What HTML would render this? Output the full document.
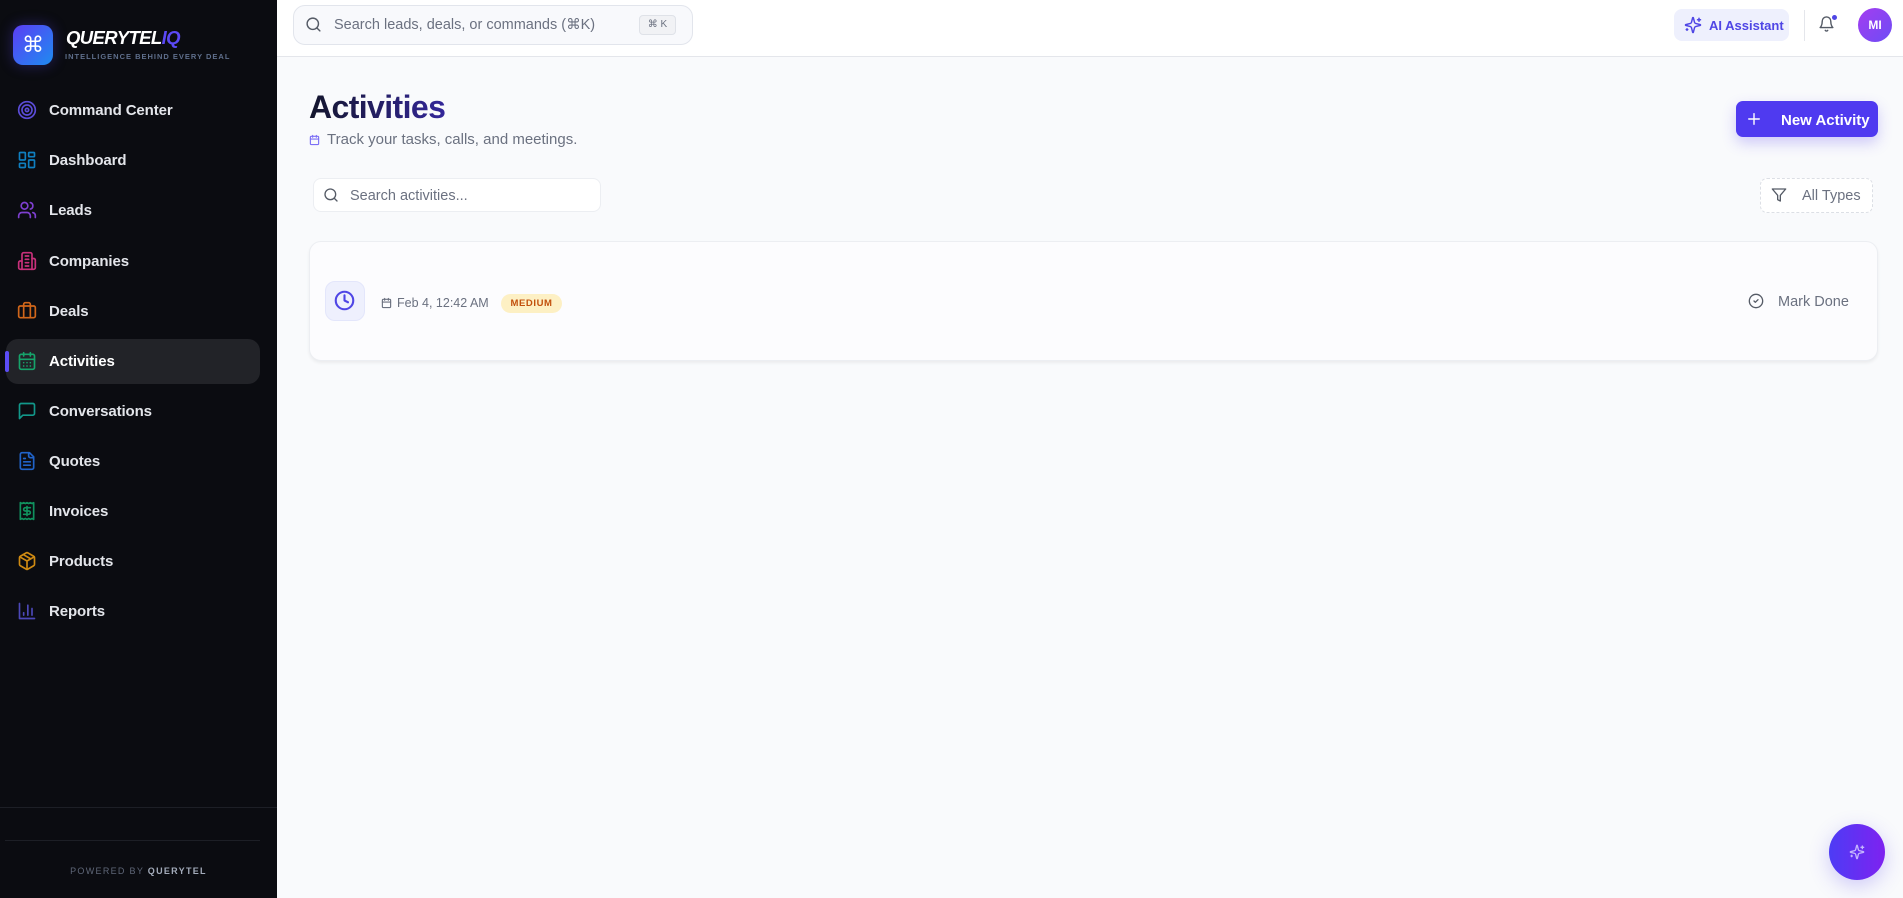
<!DOCTYPE html>
<html><head><meta charset="utf-8"><style>
*{box-sizing:border-box;margin:0;padding:0}
body{width:1903px;height:898px;overflow:hidden;font-family:"Liberation Sans",sans-serif;background:#f9fafc;position:relative}
.sb{position:absolute;left:0;top:0;width:277px;height:898px;background:#0b0c11}
.abs{position:absolute}
.nav{position:absolute;left:0;width:277px;height:46px;display:flex;align-items:center}
.nav svg{position:absolute;left:17px;top:13px;width:20px;height:20px;fill:none;stroke-width:2;stroke-linecap:round;stroke-linejoin:round}
.nav span{position:absolute;left:49px;top:15px;color:#e3e5ea;font-size:15px;font-weight:bold;letter-spacing:-.1px}
svg.i{fill:none;stroke-linecap:round;stroke-linejoin:round}
</style></head><body>
<div class="sb">
  <div class="abs" style="left:13px;top:25px;width:40px;height:40px;border-radius:10px;background:linear-gradient(135deg,#5b3df5,#1e8cf0);box-shadow:0 0 14px rgba(90,70,240,.35);display:flex;align-items:center;justify-content:center;color:#fff;font-size:22px;font-family:'DejaVu Sans',sans-serif">⌘</div>
  <div class="abs" style="left:66px;top:27px;font-size:18.5px;font-weight:900;font-style:italic;color:#fff;letter-spacing:-.6px">QUERYTEL<span style="color:#5b49f5">IQ</span></div>
  <div class="abs" style="left:65px;top:52px;font-size:7.5px;font-weight:bold;color:#5f6f8c;letter-spacing:1px">INTELLIGENCE BEHIND EVERY DEAL</div>

  <div class="abs" style="left:6px;top:339px;width:254px;height:45px;border-radius:12px;background:#222328"></div>
  <div class="abs" style="left:5px;top:351px;width:4px;height:21px;border-radius:2px;background:#5b4cf5"></div>

  <div class="nav" style="top:87px"><svg viewBox="0 0 24 24" stroke="#5b4cd8"><circle cx="12" cy="12" r="10"/><circle cx="12" cy="12" r="6"/><circle cx="12" cy="12" r="2"/></svg><span>Command Center</span></div>
  <div class="nav" style="top:137px"><svg viewBox="0 0 24 24" stroke="#0f7fc0"><rect x="3" y="3" width="7" height="9" rx="1"/><rect x="14" y="3" width="7" height="5" rx="1"/><rect x="14" y="12" width="7" height="9" rx="1"/><rect x="3" y="16" width="7" height="5" rx="1"/></svg><span>Dashboard</span></div>
  <div class="nav" style="top:187px"><svg viewBox="0 0 24 24" stroke="#7e3fd0"><path d="M16 21v-2a4 4 0 0 0-4-4H6a4 4 0 0 0-4 4v2"/><circle cx="9" cy="7" r="4"/><path d="M22 21v-2a4 4 0 0 0-3-3.87M16 3.13a4 4 0 0 1 0 7.75"/></svg><span>Leads</span></div>
  <div class="nav" style="top:238px"><svg viewBox="0 0 24 24" stroke="#c8307a"><path d="M6 22V4a2 2 0 0 1 2-2h8a2 2 0 0 1 2 2v18Z"/><path d="M6 12H4a2 2 0 0 0-2 2v6a2 2 0 0 0 2 2h2M18 9h2a2 2 0 0 1 2 2v9a2 2 0 0 1-2 2h-2M10 6h4M10 10h4M10 14h4M10 18h4"/></svg><span>Companies</span></div>
  <div class="nav" style="top:288px"><svg viewBox="0 0 24 24" stroke="#d0661a"><path d="M16 20V4a2 2 0 0 0-2-2h-4a2 2 0 0 0-2 2v16"/><rect x="2" y="6" width="20" height="14" rx="2"/></svg><span>Deals</span></div>
  <div class="nav" style="top:338px"><svg viewBox="0 0 24 24" stroke="#16a36a"><rect x="3" y="4" width="18" height="18" rx="2"/><path d="M16 2v4M8 2v4M3 10h18M8 14h.01M12 14h.01M16 14h.01M8 18h.01M12 18h.01M16 18h.01"/></svg><span style="color:#fff">Activities</span></div>
  <div class="nav" style="top:388px"><svg viewBox="0 0 24 24" stroke="#12988a"><path d="M21 15a2 2 0 0 1-2 2H7l-4 4V5a2 2 0 0 1 2-2h14a2 2 0 0 1 2 2z"/></svg><span>Conversations</span></div>
  <div class="nav" style="top:438px"><svg viewBox="0 0 24 24" stroke="#2063c9"><path d="M15 2H6a2 2 0 0 0-2 2v16a2 2 0 0 0 2 2h12a2 2 0 0 0 2-2V7Z"/><path d="M14 2v4a2 2 0 0 0 2 2h4M10 9H8M16 13H8M16 17H8"/></svg><span>Quotes</span></div>
  <div class="nav" style="top:488px"><svg viewBox="0 0 24 24" stroke="#10915e"><path d="M4 2v20l2-1 2 1 2-1 2 1 2-1 2 1 2-1 2 1V2l-2 1-2-1-2 1-2-1-2 1-2-1-2 1Z"/><path d="M16 8h-6a2 2 0 1 0 0 4h4a2 2 0 1 1 0 4H8M12 17.5v-11"/></svg><span>Invoices</span></div>
  <div class="nav" style="top:538px"><svg viewBox="0 0 24 24" stroke="#cf8a12"><path d="M11 21.73a2 2 0 0 0 2 0l7-4A2 2 0 0 0 21 16V8a2 2 0 0 0-1-1.730l-7-4a2 2 0 0 0-2 0l-7 4A2 2 0 0 0 3 8v8a2 2 0 0 0 1 1.73z"/><path d="M12 22V12M3.3 7 12 12l8.7-5M7.5 4.27l9 5.15"/></svg><span>Products</span></div>
  <div class="nav" style="top:588px"><svg viewBox="0 0 24 24" stroke="#4c48b8"><path d="M3 3v18h18M18 17V9M13 17V5M8 17v-3"/></svg><span>Reports</span></div>

  <div class="abs" style="left:0;top:807px;width:277px;height:1px;background:#1d1f26"></div>
  <div class="abs" style="left:5px;top:840px;width:255px;height:1px;background:#1d1f26"></div>
  <div class="abs" style="left:0;top:866px;width:277px;text-align:center;font-size:9px;letter-spacing:1.3px;color:#5f6778">POWERED BY <b style="color:#a3abba">QUERYTEL</b></div>
</div>

<!-- top bar -->
<div class="abs" style="left:277px;top:0;width:1626px;height:57px;background:#fff;border-bottom:1px solid #e4e6eb"></div>
<div class="abs" style="left:293px;top:5px;width:400px;height:40px;border:1px solid #e2e5ec;border-radius:12px;background:#f8f9fc"></div>
<svg class="i abs" style="left:305px;top:16px" width="17" height="17" viewBox="0 0 24 24" stroke="#555b66" stroke-width="2"><circle cx="11" cy="11" r="8"/><path d="m21 21-4.3-4.3"/></svg>
<div class="abs" style="left:334px;top:17px;font-size:14.5px;color:#6b7180">Search leads, deals, or commands (<span style="font-family:'DejaVu Sans'">⌘</span>K)</div>
<div class="abs" style="left:639px;top:15px;width:37px;height:20px;border:1px solid #dfe2e8;border-radius:4px;background:#f1f2f5;font-size:10px;color:#6b7180;text-align:center;line-height:18px"><span style="font-family:'DejaVu Sans'">⌘</span> K</div>

<div class="abs" style="left:1674px;top:9px;width:115px;height:32px;border-radius:8px;background:#eef0fd"></div>
<svg class="i abs" style="left:1684px;top:16px" width="18" height="18" viewBox="0 0 24 24" stroke="#4f46e5" stroke-width="2"><path d="M9.94 15.5A2 2 0 0 0 8.5 14.06l-6.140-1.58a.5.5 0 0 1 0-.96L8.5 9.94A2 2 0 0 0 9.94 8.5l1.58-6.14a.5.5 0 0 1 .96 0l1.58 6.14A2 2 0 0 0 15.5 9.94l6.14 1.58a.5.5 0 0 1 0 .96L15.5 14.06a2 2 0 0 0-1.44 1.44l-1.58 6.14a.5.5 0 0 1-.96 0z"/><path d="M20 3v4M22 5h-4M4 17v2M5 18H3"/></svg>
<div class="abs" style="left:1709px;top:18px;font-size:13px;font-weight:bold;color:#4f46e5">AI Assistant</div>
<div class="abs" style="left:1804px;top:10px;width:1px;height:31px;background:#e4e6eb"></div>
<svg class="i abs" style="left:1818px;top:15px" width="17" height="18" viewBox="0 0 24 24" stroke="#555b66" stroke-width="2"><path d="M6 8a6 6 0 0 1 12 0c0 7 3 9 3 9H3s3-2 3-9M10.3 21a1.94 1.94 0 0 0 3.4 0"/></svg>
<div class="abs" style="left:1832px;top:15px;width:5px;height:5px;border-radius:50%;background:#4f46e5"></div>
<div class="abs" style="left:1858px;top:8px;width:34px;height:34px;border-radius:50%;background:linear-gradient(135deg,#a43df0,#6d4cf5);color:#fff;font-size:12px;font-weight:bold;text-align:center;line-height:34px">MI</div>

<!-- header -->
<div class="abs" style="left:309px;top:89px;font-size:32px;font-weight:bold;letter-spacing:-.6px;background:linear-gradient(90deg,#13152b,#34279a);-webkit-background-clip:text;color:transparent">Activities</div>
<svg class="i abs" style="left:309px;top:134px" width="11" height="12" viewBox="0 0 24 24" stroke="#7c6ff5" stroke-width="2.5" fill="#d8d4fb"><rect x="3" y="4" width="18" height="18" rx="2"/><path d="M16 2v4M8 2v4M3 10h18"/></svg>
<div class="abs" style="left:327px;top:131px;font-size:15px;color:#6b7180">Track your tasks, calls, and meetings.</div>

<div class="abs" style="left:1736px;top:101px;width:142px;height:36px;border-radius:7px;background:#4f3af0;box-shadow:0 6px 14px rgba(79,58,240,.25)"></div>
<svg class="i abs" style="left:1747px;top:112px" width="14" height="14" viewBox="0 0 24 24" stroke="#fff" stroke-width="2.4"><path d="M12 3v18M3 12h18"/></svg>
<div class="abs" style="left:1781px;top:112px;font-size:15px;font-weight:bold;color:#fff">New Activity</div>

<div class="abs" style="left:313px;top:178px;width:288px;height:34px;border:1px solid #eceef2;border-radius:8px;background:#fff"></div>
<svg class="i abs" style="left:323px;top:187px" width="16" height="16" viewBox="0 0 24 24" stroke="#555b66" stroke-width="2"><circle cx="11" cy="11" r="8"/><path d="m21 21-4.3-4.3"/></svg>
<div class="abs" style="left:350px;top:188px;font-size:14.5px;color:#6b7180">Search activities...</div>

<div class="abs" style="left:1760px;top:178px;width:113px;height:35px;border:1px dashed #dcdfe5;border-radius:7px;background:#fff"></div>
<svg class="i abs" style="left:1771px;top:187px" width="16" height="16" viewBox="0 0 24 24" stroke="#555b66" stroke-width="2"><path d="M22 3H2l8 9.46V19l4 2v-8.54z"/></svg>
<div class="abs" style="left:1802px;top:188px;font-size:14.5px;color:#6b7180">All Types</div>

<!-- card -->
<div class="abs" style="left:309px;top:241px;width:1569px;height:120px;border:1px solid #eceef2;border-radius:12px;background:#fcfcfe;box-shadow:0 2px 3px rgba(0,0,0,.06)"></div>
<div class="abs" style="left:325px;top:281px;width:40px;height:40px;border:1px solid #e3e6fb;border-radius:10px;background:#eef0fd"></div>
<svg class="i abs" style="left:334px;top:290px" width="21" height="21" viewBox="0 0 24 24" stroke="#4f46e5" stroke-width="2.4"><circle cx="12" cy="12" r="10"/><path d="M12 6v6l4 2"/></svg>
<svg class="i abs" style="left:381px;top:297px" width="11" height="12" viewBox="0 0 24 24" stroke="#6b7180" stroke-width="2.5"><rect x="3" y="4" width="18" height="18" rx="2"/><path d="M16 2v4M8 2v4M3 10h18"/></svg>
<div class="abs" style="left:397px;top:296px;font-size:12.5px;color:#6b7180">Feb 4, 12:42 AM</div>
<div class="abs" style="left:501px;top:294px;width:61px;height:19px;border-radius:10px;background:#fdf0c4;font-size:9.5px;font-weight:bold;color:#c2500c;text-align:center;line-height:19px;letter-spacing:.6px">MEDIUM</div>
<svg class="i abs" style="left:1748px;top:293px" width="16" height="16" viewBox="0 0 24 24" stroke="#555b66" stroke-width="2"><circle cx="12" cy="12" r="10"/><path d="m9 12 2 2 4-4"/></svg>
<div class="abs" style="left:1778px;top:294px;font-size:14.5px;color:#6b7180">Mark Done</div>

<!-- fab -->
<div class="abs" style="left:1829px;top:824px;width:56px;height:56px;border-radius:50%;background:linear-gradient(90deg,#4d3cf5,#7e22f0);box-shadow:0 6px 20px rgba(80,60,240,.25)"></div>
<svg class="i abs" style="left:1849px;top:844px" width="16" height="16" viewBox="0 0 24 24" stroke="#c4b5fd" stroke-width="2"><path d="M9.94 15.5A2 2 0 0 0 8.5 14.06l-6.14-1.58a.5.5 0 0 1 0-.96L8.5 9.94A2 2 0 0 0 9.94 8.5l1.58-6.14a.5.5 0 0 1 .96 0l1.58 6.14A2 2 0 0 0 15.5 9.94l6.14 1.58a.5.5 0 0 1 0 .96L15.5 14.06a2 2 0 0 0-1.44 1.44l-1.58 6.14a.5.5 0 0 1-.96 0z"/><path d="M20 3v4M22 5h-4M4 17v2M5 18H3"/></svg>
</body></html>
